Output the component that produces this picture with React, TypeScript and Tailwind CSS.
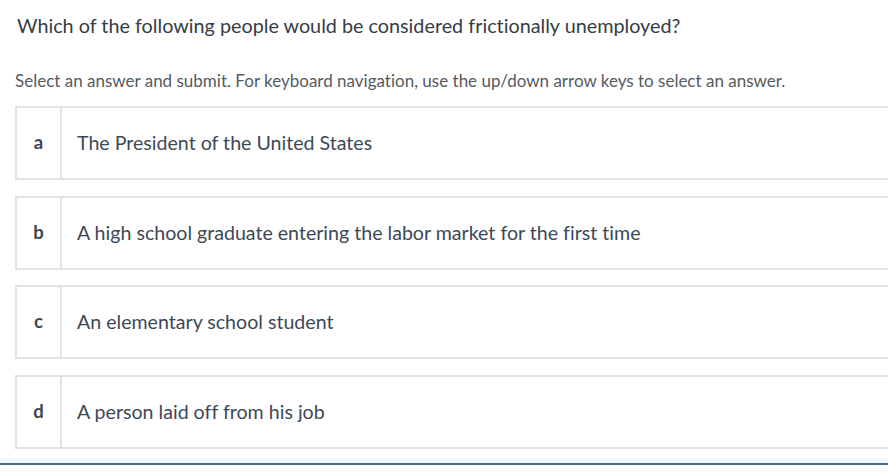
const OPTIONS = [
  { key: "a", text: "The President of the United States" },
  { key: "b", text: "A high school graduate entering the labor market for the first time" },
  { key: "c", text: "An elementary school student" },
  { key: "d", text: "A person laid off from his job" },
];

export default function App() {
  return (
    <div className="w-[888px] h-[473px] overflow-hidden bg-white font-['Lato','Noto_Sans',sans-serif] [font-variant-ligatures:none]">
      <div className="h-[458px]">
        <h1 className="pl-[17px] pt-[12px] text-[19.8px] leading-[26px] text-[#353d45]">
          Which of the following people would be considered frictionally unemployed?
        </h1>
        <p className="pl-[15px] mt-[32px] text-[17px] leading-[22px] text-[#555b61]">
          Select an answer and submit. For keyboard navigation, use the up/down arrow keys to select an answer.
        </p>
        <div className="ml-[15px] mr-[-20px] mt-[14px] flex flex-col gap-[15.5px]">
          {OPTIONS.map((o) => (
            <div key={o.key} className="flex h-[74px] border-2 border-[#e1e2e7] bg-white">
              <div className="w-[45px] shrink-0 flex items-center justify-center border-r-2 border-[#e1e2e7] text-[18.5px] font-bold text-[#3d4650]">
                {o.key}
              </div>
              <div className="flex items-center pl-[15px] text-[19.6px] text-[#3d4955]">{o.text}</div>
            </div>
          ))}
        </div>
      </div>
      <div className="h-[5px] bg-[#f0f9fc]" />
      <div className="h-[2px] bg-[#4d6b85]" />
    </div>
  );
}
